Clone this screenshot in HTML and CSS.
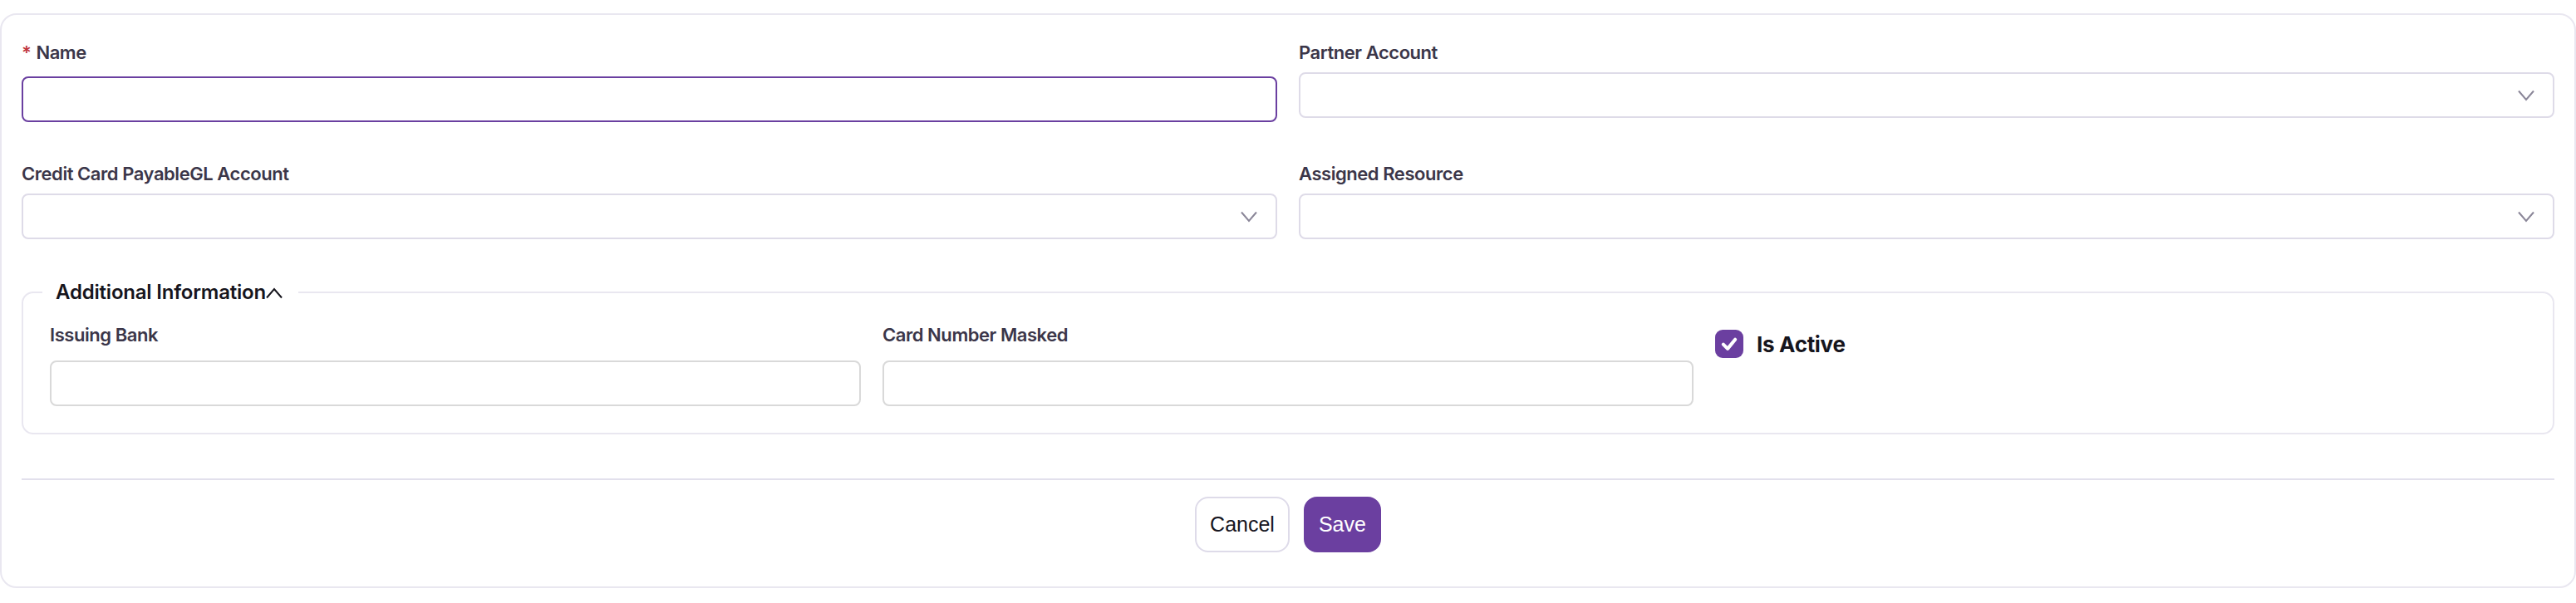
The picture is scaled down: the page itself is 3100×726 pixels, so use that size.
FILE: index.html
```html
<!DOCTYPE html>
<html lang="en">
<head>
    <meta charset="UTF-8">
    <meta name="viewport" content="width=device-width, initial-scale=1.0">
    <title>Credit Card</title>
    <link rel="stylesheet" href="styles.css">
</head>
<body>
    <div class="form-card">
        <div class="form-grid">
            <div class="field">
                <label class="field-label is-required"><span class="req">*</span>Name</label>
                <input class="text-input is-focused" type="text">
            </div>

            <div class="field">
                <label class="field-label">Partner Account</label>
                <div class="select">
                    <svg class="chevron" viewBox="0 0 20 14"><path d="M1 1.5 L10 12 L19 1.5"/></svg>
                </div>
            </div>

            <div class="field">
                <label class="field-label">Credit Card PayableGL Account</label>
                <div class="select">
                    <svg class="chevron" viewBox="0 0 20 14"><path d="M1 1.5 L10 12 L19 1.5"/></svg>
                </div>
            </div>

            <div class="field">
                <label class="field-label">Assigned Resource</label>
                <div class="select">
                    <svg class="chevron" viewBox="0 0 20 14"><path d="M1 1.5 L10 12 L19 1.5"/></svg>
                </div>
            </div>
        </div>

        <fieldset class="section">
            <legend class="section-title">
                Additional Information<svg class="caret" viewBox="0 0 20 14"><path d="M1 12.5 L10 2 L19 12.5"/></svg>
            </legend>
            <div class="section-grid">
                <div class="field">
                    <label class="field-label">Issuing Bank</label>
                    <input class="text-input" type="text">
                </div>
                <div class="field">
                    <label class="field-label">Card Number Masked</label>
                    <input class="text-input" type="text">
                </div>
                <div class="check-field">
                    <span class="checkbox">
                        <svg viewBox="0 0 20 20"><path d="M4.5 10.5 L8.5 14.5 L15.5 6"/></svg>
                    </span>
                    <span class="check-label">Is Active</span>
                </div>
            </div>
        </fieldset>

        <div class="form-actions">
            <button class="btn btn-cancel">Cancel</button>
            <button class="btn btn-save">Save</button>
        </div>
    </div>
</body>
</html>
```

FILE: styles.css
```css
body {
    margin: 0;
    padding-top: 16px;
    font-family: Inter, "Liberation Sans", sans-serif;
    background-color: #ffffff;
}

.form-card {
    border: 2px solid #e9e7f0;
    border-radius: 20px;
    padding: 29px 24px 41px;
}

.form-grid {
    display: grid;
    grid-template-columns: 1fr 1fr;
    column-gap: 26px;
    row-gap: 46px;
}

.field {
    display: flex;
    flex-direction: column;
}

.field-label {
    font-size: 22px;
    line-height: 32px;
    font-weight: 600;
    color: #3b3649;
    letter-spacing: -0.45px;
    margin-bottom: 8px;
}

.field-label.is-required {
    margin-bottom: 13px;
}

.req {
    color: #c0353a;
    margin-right: 6px;
}

.text-input,
.select {
    box-sizing: border-box;
    height: 55px;
    width: 100%;
    margin: 0;
    border: 2px solid #dedbe8;
    border-radius: 8px;
    background: #fff;
}

.text-input {
    padding: 0 16px;
    font: inherit;
}

.text-input.is-focused {
    border-color: #6a3fa0;
}

.select {
    display: flex;
    align-items: center;
    justify-content: flex-end;
    padding-right: 22px;
}

.chevron {
    width: 20px;
    height: 14px;
    fill: none;
    stroke: #8a8698;
    stroke-width: 2;
}

.section {
    margin: 48px 0 0;
    border: 2px solid #e9e7f0;
    border-radius: 14px;
    padding: 19px 32px 32px;
    min-width: 0;
}

.section-title {
    padding: 0 19px 0 16px;
    margin-left: -9px;
    font-size: 24px;
    line-height: 32px;
    font-weight: 600;
    color: #16151d;
    letter-spacing: -0.2px;
}

.caret {
    width: 20px;
    height: 14px;
    fill: none;
    stroke: #16151d;
    stroke-width: 2;
}

.section-grid {
    display: grid;
    grid-template-columns: 1fr 1fr 1fr;
    column-gap: 26px;
}

.section-grid .field-label {
    margin-bottom: 15px;
}

.section-grid .text-input {
    border-color: #d9d9d9;
}

.check-field {
    display: flex;
    align-items: center;
    gap: 16px;
    padding-top: 10px;
    align-self: start;
}

.checkbox {
    display: flex;
    align-items: center;
    justify-content: center;
    width: 34px;
    height: 34px;
    border-radius: 9px;
    background-color: #6b3fa0;
}

.checkbox svg {
    width: 26px;
    height: 26px;
    fill: none;
    stroke: #ffffff;
    stroke-width: 3.2;
    stroke-linecap: round;
    stroke-linejoin: round;
}

.check-label {
    font-size: 26px;
    font-weight: 700;
    color: #16151d;
    letter-spacing: -0.3px;
}

.form-actions {
    display: flex;
    justify-content: center;
    gap: 17px;
    margin-top: 53px;
    padding-top: 20px;
    border-top: 2px solid #e2e0ec;
}

.btn {
    height: 67px;
    padding: 0 16px;
    border-radius: 16px;
    font-family: "Liberation Sans", Arial, sans-serif;
    font-size: 25px;
}

.btn-cancel {
    border: 2px solid #dedbe9;
    background: #ffffff;
    color: #16151d;
}

.btn-save {
    border: 2px solid #6b3fa0;
    background: #6b3fa0;
    color: #ffffff;
}
```
